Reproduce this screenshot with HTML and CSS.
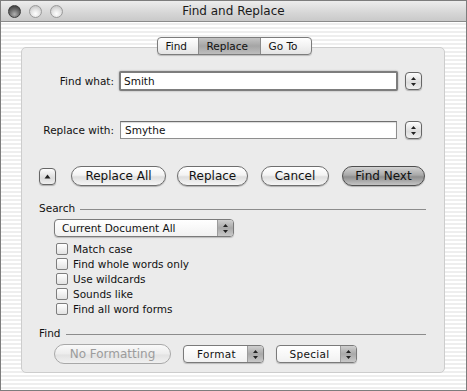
FILE: index.html
```html
<!DOCTYPE html>
<html lang="en">
<head>
  <meta charset="UTF-8" />
  <title>Find and Replace</title>
  <link rel="stylesheet" href="styles.css">
</head>
<body>
  <div class="window">
    <div class="titlebar">
      <div class="lights">
        <span class="light close"></span>
        <span class="light"></span>
        <span class="light"></span>
      </div>
      <div class="title">Find and Replace</div>
    </div>

    <div class="content">
      <div class="tabs">
        <span class="tab">Find</span>
        <span class="tab active">Replace</span>
        <span class="tab">Go To</span>
      </div>

      <div class="panel">
        <div class="field-row">
          <label class="field-label">Find what:</label>
          <div class="input focused">Smith</div>
          <span class="stepper">
            <svg width="7" height="11" viewBox="0 0 7 11"><path d="M3.5 1 L6 4 H1 Z M3.5 10 L6 7 H1 Z" fill="#222"/></svg>
          </span>
        </div>

        <div class="field-row second">
          <label class="field-label">Replace with:</label>
          <div class="input">Smythe</div>
          <span class="stepper">
            <svg width="7" height="11" viewBox="0 0 7 11"><path d="M3.5 1 L6 4 H1 Z M3.5 10 L6 7 H1 Z" fill="#222"/></svg>
          </span>
        </div>

        <div class="button-row">
          <span class="disclosure">
            <svg width="7" height="5" viewBox="0 0 7 5"><path d="M3.5 0.5 L6.5 4.5 H0.5 Z" fill="#222"/></svg>
          </span>
          <button class="pill w-all">Replace All</button>
          <button class="pill w-replace">Replace</button>
          <button class="pill w-cancel">Cancel</button>
          <button class="pill default w-next">Find Next</button>
        </div>

        <div class="group-head">
          <span>Search</span>
          <span class="rule"></span>
        </div>

        <div class="popup wide">
          <span class="popup-text">Current Document All</span>
          <span class="popup-arrows">
            <svg width="7" height="11" viewBox="0 0 7 11"><path d="M3.5 1 L6 4 H1 Z M3.5 10 L6 7 H1 Z" fill="#222"/></svg>
          </span>
        </div>

        <ul class="checks">
          <li><span class="box"></span>Match case</li>
          <li><span class="box"></span>Find whole words only</li>
          <li><span class="box"></span>Use wildcards</li>
          <li><span class="box"></span>Sounds like</li>
          <li><span class="box"></span>Find all word forms</li>
        </ul>

        <div class="group-head find-head">
          <span>Find</span>
          <span class="rule"></span>
        </div>

        <div class="bottom-row">
          <button class="pill disabled w-noformat">No Formatting</button>
          <div class="popup small">
            <span class="popup-text">Format</span>
            <span class="popup-arrows">
              <svg width="7" height="11" viewBox="0 0 7 11"><path d="M3.5 1 L6 4 H1 Z M3.5 10 L6 7 H1 Z" fill="#222"/></svg>
            </span>
          </div>
          <div class="popup small">
            <span class="popup-text">Special</span>
            <span class="popup-arrows">
              <svg width="7" height="11" viewBox="0 0 7 11"><path d="M3.5 1 L6 4 H1 Z M3.5 10 L6 7 H1 Z" fill="#222"/></svg>
            </span>
          </div>
        </div>
      </div>
    </div>
  </div>
</body>
</html>
```

FILE: styles.css
```css
body {
  margin: 0;
  font-family: 'DejaVu Sans', 'Liberation Sans', sans-serif;
  color: #111;
  background: #fff;
}

.window {
  width: 467px;
  height: 391px;
  box-sizing: border-box;
  border: 1px solid #7d7d7d;
  display: flex;
  flex-direction: column;
  background: repeating-linear-gradient(to bottom, #ffffff 0, #ffffff 2px, #eeeeee 2px, #eeeeee 4px);
}

/* title bar */
.titlebar {
  height: 20px;
  display: flex;
  align-items: center;
  position: relative;
  border-bottom: 1px solid #8a8a8a;
  background: linear-gradient(to bottom, #ededed, #d6d6d6 60%, #c9c9c9);
}

.lights {
  display: flex;
  gap: 8px;
  padding-left: 7px;
}

.light {
  width: 13px;
  height: 13px;
  border-radius: 50%;
  box-sizing: border-box;
  border: 1px solid #9a9a9a;
  background: radial-gradient(circle at 50% 70%, #ffffff 0, #e4e4e4 45%, #b8b8b8 100%);
}

.light.close {
  border-color: #3c3c3c;
  background: radial-gradient(circle at 50% 75%, #b0b0b0 0, #6a6a6a 50%, #2e2e2e 100%);
}

.title {
  position: absolute;
  left: 0;
  right: 0;
  text-align: center;
  font-size: 12px;
  color: #1a1a1a;
  pointer-events: none;
}

/* content */
.content {
  flex: 1;
  padding: 15px 21px 17px 20px;
  display: flex;
  flex-direction: column;
}

.tabs {
  align-self: center;
  display: flex;
  height: 18px;
  margin-bottom: -8px;
  margin-left: 2px;
  position: relative;
  z-index: 1;
  border: 1px solid #7c7c7c;
  border-radius: 4px;
  box-sizing: border-box;
  overflow: hidden;
  background: linear-gradient(to bottom, #ffffff, #f2f2f2 50%, #e4e4e4);
  box-shadow: 0 1px 1px rgba(0,0,0,0.2);
}

.tab {
  font-size: 10.5px;
  line-height: 16px;
  padding: 0 8px;
  border-left: 1px solid #8a8a8a;
}

.tab:first-child {
  border-left: none;
  width: 24px;
}

.tab.active {
  width: 45px;
  background: linear-gradient(to bottom, #c4c4c4, #a5a5a5 50%, #bdbdbd);
}

.tab:last-child {
  width: 34px;
}

.panel {
  flex: 1;
  background: #ebebeb;
  border: 1px solid #cdcdcd;
  border-radius: 5px;
  padding: 23px 18px 0 17px;
  font-size: 10.5px;
}

.field-row {
  display: flex;
  align-items: center;
  height: 20px;
}

.field-row.second {
  margin-top: 29px;
}

.field-label {
  width: 75px;
  text-align: right;
  margin-right: 5px;
}

.input {
  width: 277px;
  height: 18px;
  box-sizing: border-box;
  background: #fff;
  border: 1px solid #8e8e8e;
  border-top-color: #6f6f6f;
  box-shadow: inset 0 1px 1px rgba(0,0,0,0.15);
  padding: 0 4px;
  line-height: 16px;
  margin-right: 7px;
}

.input.focused {
  width: 279px;
  height: 20px;
  border: 2px solid #7d7d7d;
  border-radius: 2px;
  padding: 0 3px;
  line-height: 16px;
  box-shadow: 0 0 2px #9a9a9a;
  margin-right: 7px;
}

.field-row.second .input {
  margin-left: 1px;
  margin-right: 8px;
}

.stepper, .disclosure {
  width: 17px;
  height: 18px;
  box-sizing: border-box;
  border: 1px solid #666;
  border-radius: 4px;
  background: linear-gradient(to bottom, #fdfdfd, #dcdcdc 60%, #efefef);
  box-shadow: 0 1px 1px rgba(0,0,0,0.25);
  display: flex;
  align-items: center;
  justify-content: center;
}

/* buttons */
.button-row {
  display: flex;
  align-items: center;
  margin-top: 26px;
  height: 20px;
}

.disclosure {
  height: 17px;
  margin-right: 15px;
}

.pill {
  font-family: inherit;
  font-size: 12px;
  color: #111;
  height: 20px;
  padding: 0;
  border: 1px solid #6e6e6e;
  border-radius: 10px;
  background: linear-gradient(to bottom, #ffffff, #f4f4f4 45%, #dedede 55%, #f6f6f6);
  box-shadow: 0 1px 1px rgba(0,0,0,0.25);
}

.w-all { width: 95px; margin-right: 11px; }
.w-replace { width: 71px; margin-right: 13px; }
.w-cancel { width: 68px; margin-right: 13px; }
.w-next { width: 83px; }

.pill.default {
  border-color: #4e4e4e;
  background: linear-gradient(to bottom, #d2d2d2, #a9a9a9 45%, #8f8f8f 55%, #c4c4c4);
}

.pill.disabled {
  color: #9c9c9c;
  border-color: #a8a8a8;
  background: linear-gradient(to bottom, #fafafa, #ececec 50%, #e2e2e2 55%, #f0f0f0);
  box-shadow: none;
}

/* groups */
.group-head {
  display: flex;
  align-items: center;
  margin-top: 15px;
  height: 13px;
}

.rule {
  flex: 1;
  border-top: 1px solid #8c8c8c;
  margin: 4px 0 0 5px;
}

.popup {
  display: flex;
  height: 18px;
  box-sizing: border-box;
  border: 1px solid #7a7a7a;
  border-radius: 4px;
  background: linear-gradient(to bottom, #ffffff, #f1f1f1);
  box-shadow: 0 1px 1px rgba(0,0,0,0.2);
  overflow: hidden;
}

.popup.wide {
  width: 180px;
  margin: 5px 0 0 15px;
}

.popup-text {
  flex: 1;
  line-height: 16px;
  padding-left: 7px;
}

.popup-arrows {
  width: 15px;
  border-left: 1px solid #9c9c9c;
  background: linear-gradient(to bottom, #cfcfcf, #a9a9a9 50%, #c8c8c8);
  display: flex;
  align-items: center;
  justify-content: center;
}

.checks {
  list-style: none;
  margin: 4px 0 0 17px;
  padding: 0;
}

.checks li {
  height: 15px;
  display: flex;
  align-items: center;
}

.box {
  width: 12px;
  height: 12px;
  box-sizing: border-box;
  border: 1px solid #7e7e7e;
  border-radius: 2px;
  background: linear-gradient(to bottom, #ffffff, #e2e2e2);
  margin-right: 5px;
}

.find-head {
  margin-top: 10px;
}

.bottom-row {
  display: flex;
  align-items: center;
  margin: 5px 0 0 15px;
  height: 20px;
}

.w-noformat {
  width: 117px;
  margin-right: 12px;
}

.popup.small {
  width: 81px;
  margin-right: 12px;
}

.popup.small .popup-text {
  text-align: center;
  padding-left: 2px;
  letter-spacing: 0.3px;
}
```
